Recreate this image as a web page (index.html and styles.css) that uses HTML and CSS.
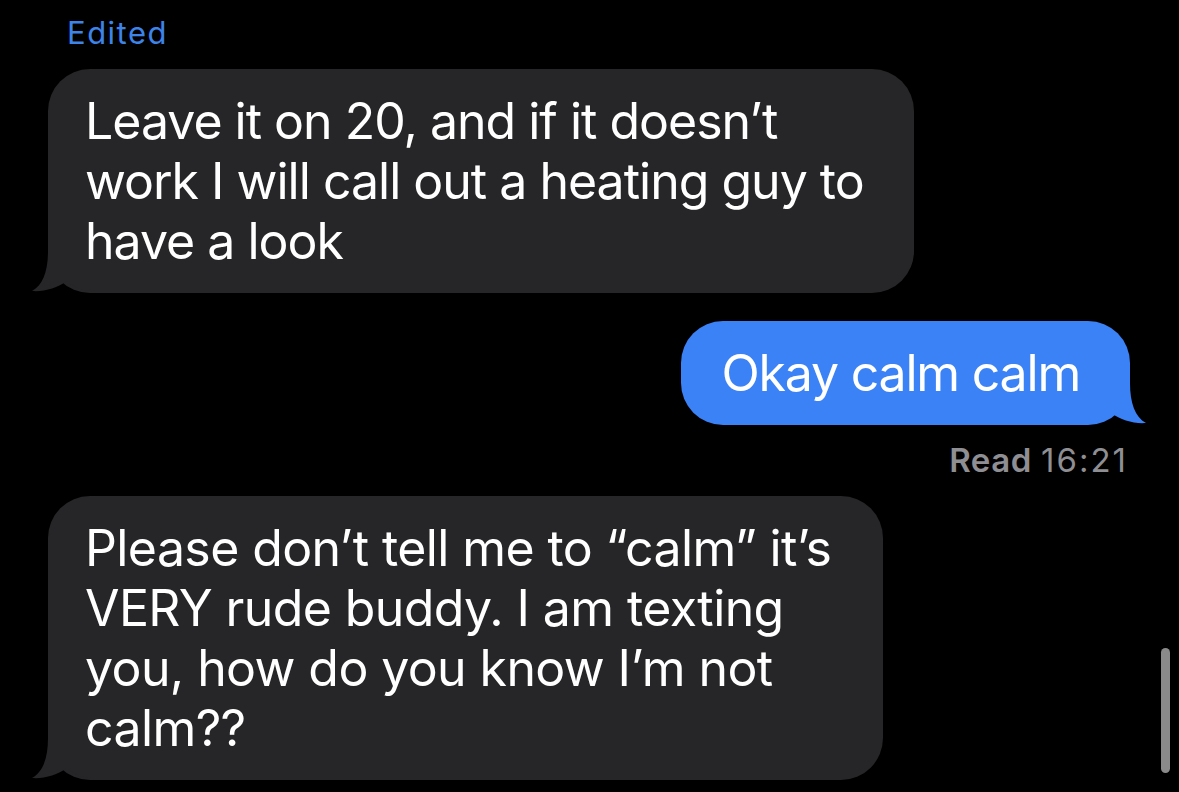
FILE: index.html
```html
<!DOCTYPE html>
<html>
<head>
<meta charset="utf-8">
<link rel="stylesheet" href="styles.css">
</head>
<body>
<main class="thread">
  <div class="edited">Edited</div>
  <div class="row in first">
    <div class="bubble gray">
      <svg class="tail tail-left" width="60" height="42" viewBox="0 0 60 42"><path d="M16,0 C16,20 11,34 0,40 C12,41 25,37 35,30 C42,36 50,40 60,40 L60,0 Z" fill="#262628"/></svg>
      <span class="text">Leave it on 20, and if it doesn’t<br>work I will call out a heating guy to<br>have a look</span>
    </div>
  </div>
  <div class="row out">
    <div class="bubble blue">
      <svg class="tail tail-right" width="60" height="42" viewBox="0 0 60 42"><path d="M44,0 C44,20 49,34 60,40 C48,41 35,37 25,30 C18,36 10,40 0,40 L0,0 Z" fill="#3b82f6"/></svg>
      <span class="text">Okay calm calm</span>
    </div>
  </div>
  <div class="receipt"><b>Read</b> <span class="time">16:21</span></div>
  <div class="row in">
    <div class="bubble gray wide">
      <svg class="tail tail-left" width="60" height="42" viewBox="0 0 60 42"><path d="M16,0 C16,20 11,34 0,40 C12,41 25,37 35,30 C42,36 50,40 60,40 L60,0 Z" fill="#262628"/></svg>
      <span class="text">Please don’t tell me to “calm” it’s<br>VERY rude buddy. I am texting<br>you, how do you know I’m not<br>calm??</span>
    </div>
  </div>
</main>
<div class="scrollbar"></div>
</body>
</html>
```
FILE: styles.css
```css
html, body {
  margin: 0;
  padding: 0;
  background: #000;
  height: 100%;
  overflow: hidden;
}
body {
  font-family: "Inter", "Liberation Sans", sans-serif;
  color: #fff;
  position: relative;
}
.thread {
  display: flex;
  flex-direction: column;
  padding: 14px 49px 0 48px;
}
.edited {
  color: #3d84ea;
  font-size: 31px;
  line-height: 38px;
  letter-spacing: 1.5px;
  padding-left: 19px;
  margin-bottom: 17px;
}
.row {
  display: flex;
}
.row.out {
  justify-content: flex-end;
  margin-top: 28px;
}
.receipt + .row {
  margin-top: 17px;
}
.bubble {
  position: relative;
  font-size: 50px;
  line-height: 60px;
  letter-spacing: -1px;
  padding: 22px 50px 22px 37px;
  border-radius: 42px;
  white-space: nowrap;
}
.bubble.wide {
  letter-spacing: -0.6px;
  padding-right: 52px;
}
.text {
  position: relative;
}
.bubble.gray {
  background: #262628;
}
.bubble.blue {
  background: #3b82f6;
  padding: 22px 50px 22px 40px;
  letter-spacing: -1.2px;
}
.tail {
  position: absolute;
  bottom: 0;
}
.tail-left {
  left: -16px;
}
.tail-right {
  right: -16px;
}
.receipt {
  align-self: flex-end;
  white-space: nowrap;
  color: #8e8e93;
  font-size: 33px;
  line-height: 38px;
  margin-top: 16px;
  padding-right: 2px;
}
.receipt b {
  font-weight: 600;
  letter-spacing: 0.5px;
}
.receipt .time {
  letter-spacing: 2px;
}
.scrollbar {
  position: absolute;
  left: 1161px;
  top: 648px;
  width: 9px;
  height: 125px;
  border-radius: 5px;
  background: #8a8a8a;
}
```
